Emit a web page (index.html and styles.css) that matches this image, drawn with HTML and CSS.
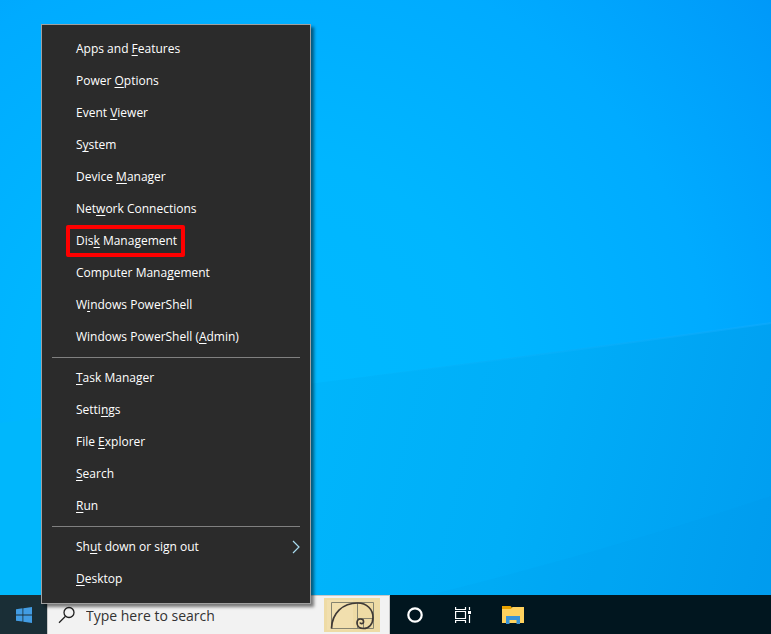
FILE: index.html
```html
<!DOCTYPE html>
<html lang="en">
  <head>
    <meta charset="UTF-8" />
    <meta name="viewport" content="width=device-width, initial-scale=1.0" />
    <title>Desktop</title>
    <link rel="stylesheet" href="styles.css">
  </head>

  <body>
    <main class="desktop">
        <svg class="wallpaper" viewBox="0 0 771 595" preserveAspectRatio="none" aria-hidden="true">
            <defs>
                <radialGradient id="sky" gradientUnits="userSpaceOnUse" cx="260" cy="400" r="700">
                    <stop offset="0" stop-color="#00baff"/>
                    <stop offset="0.35" stop-color="#00b6ff"/>
                    <stop offset="0.65" stop-color="#00abff"/>
                    <stop offset="1" stop-color="#0094f7"/>
                </radialGradient>
                <linearGradient id="floor" gradientUnits="userSpaceOnUse" x1="250" y1="400" x2="790" y2="540">
                    <stop offset="0" stop-color="#00b7fc"/>
                    <stop offset="0.5" stop-color="#00aef8"/>
                    <stop offset="1" stop-color="#009df0"/>
                </linearGradient>
                <linearGradient id="ray" x1="0" y1="0" x2="1" y2="0">
                    <stop offset="0" stop-color="#14beff" stop-opacity="0"/>
                    <stop offset="1" stop-color="#14acff" stop-opacity="0.5"/>
                </linearGradient>
            </defs>
            <rect width="771" height="595" fill="url(#sky)"/>
            <path d="M0 423 Q400 373 771 323 V595 H0Z" fill="url(#floor)"/>
            <path d="M310 383 Q560 352 771 322 L771 324 Q560 354 310 384Z" fill="url(#ray)"/>
            <path d="M430 595 Q610 550 771 496 V595Z" fill="#0090e0" fill-opacity="0.1"/>
        </svg>
    </main>

    <nav class="menu" aria-label="Quick links">
        <ul class="group">
            <li><button class="item">Apps and <u>F</u>eatures</button></li>
            <li><button class="item">Power <u>O</u>ptions</button></li>
            <li><button class="item">Event <u>V</u>iewer</button></li>
            <li><button class="item">S<u>y</u>stem</button></li>
            <li><button class="item">Device <u>M</u>anager</button></li>
            <li><button class="item">Net<u>w</u>ork Connections</button></li>
            <li><button class="item"><span class="marked">Dis<u>k</u> Management</span></button></li>
            <li><button class="item">Computer Mana<u>g</u>ement</button></li>
            <li><button class="item">W<u>i</u>ndows PowerShell</button></li>
            <li><button class="item">Windows PowerShell (<u>A</u>dmin)</button></li>
        </ul>
        <ul class="group">
            <li><button class="item"><u>T</u>ask Manager</button></li>
            <li><button class="item">Setti<u>n</u>gs</button></li>
            <li><button class="item">File <u>E</u>xplorer</button></li>
            <li><button class="item"><u>S</u>earch</button></li>
            <li><button class="item"><u>R</u>un</button></li>
        </ul>
        <ul class="group">
            <li>
                <button class="item submenu">
                    <span>Sh<u>u</u>t down or sign out</span>
                    <svg width="8" height="14" viewBox="0 0 8 14" aria-hidden="true">
                        <path d="M1 1l6 6-6 6" fill="none" stroke="#a9dcf0" stroke-width="1.2"/>
                    </svg>
                </button>
            </li>
            <li><button class="item"><u>D</u>esktop</button></li>
        </ul>
    </nav>

    <footer class="taskbar">
        <button class="start" aria-label="Start">
            <svg width="16" height="16" viewBox="0 0 16 16" aria-hidden="true">
                <path fill="#429ce3" d="M0 2.2l6.5-.9v6.2H0zM7.3 1.2L16 0v7.5H7.3zM0 8.4h6.5v6.2L0 13.8zM7.3 8.4H16V16l-8.7-1.2z"/>
            </svg>
        </button>

        <div class="search">
            <label for="search" aria-label="Search">
                <svg width="18" height="18" viewBox="0 0 18 18" aria-hidden="true">
                    <g fill="none" stroke="#1f1f1f" stroke-width="1.3">
                        <circle cx="11" cy="6.5" r="5"/>
                        <path d="M7.5 10.3L1 16.8"/>
                    </g>
                </svg>
            </label>
            <input type="text" id="search" placeholder="Type here to search">
            <svg class="spiral" width="56" height="34" viewBox="0 0 56 34" aria-hidden="true">
                <rect width="56" height="34" fill="#eedba5"/>
                <rect x="3" y="2" width="26" height="30" fill="#f3e1b4" fill-opacity="0.6"/>
                <g fill="none" stroke="#85836f" stroke-width="1">
                    <path d="M7.5 4.5H49.5V30.5H7.5zM33.500 4.500V30.500M33.500 20.500H49.500M39.500 20.500V30.500"/>
                </g>
                <path d="M7.500 30.500C8 15 19 5 33.500 5C43 5 49 11.500 49 19.500C49 26 45 30.500 39.500 30.500C35.500 30.500 33 28 33 25C33 22.500 34.500 21 36.500 21C38.800 21 39.800 22.500 39.500 24.200C39 26 36.500 26 36 24.500" fill="none" stroke="#3f3935" stroke-width="1.7"/>
            </svg>
        </div>

        <button class="app" aria-label="Cortana">
            <svg width="18" height="18" viewBox="0 0 18 18" aria-hidden="true">
                <circle cx="9" cy="9" r="6.7" fill="none" stroke="#fff" stroke-width="2.2"/>
            </svg>
        </button>
        <button class="app" aria-label="Task View">
            <svg width="18" height="18" viewBox="0 0 18 18" aria-hidden="true">
                <g fill="none" stroke="#fff" stroke-width="1.2">
                    <path d="M.6 1V3.500H10.500V1M.6 17V14.500H10.500V17M.6 5.500H10.500V12.500H.6zM14.500 1V4M14.500 9V17"/>
                </g>
                <path d="M13 5h3v3h-3z" fill="#fff"/>
            </svg>
        </button>
        <button class="app" aria-label="File Explorer">
            <svg width="22" height="20" viewBox="0 0 22 20" aria-hidden="true">
                <path d="M0 1h8.500l1.500 1.500V5H0z" fill="#e8a200"/>
                <path d="M0 4h9l1.500-2H22v16H0z" fill="#ffd25e"/>
                <path d="M4 19V11h14v8h-3.500v-4h-7v4z" fill="#3b94d6"/>
            </svg>
        </button>
    </footer>
  </body>
</html>
```
FILE: styles.css
```css
* {
  margin: 0;
  padding: 0;
  box-sizing: border-box;
  font-family: "Open Sans", "Noto Sans", sans-serif;
}

body {
  position: relative;
  display: flex;
  flex-direction: column;
  height: 100vh;
  overflow: hidden;
}

button {
  border: none;
  background: none;
  cursor: pointer;
}

svg {
  display: block;
  flex-shrink: 0;
}

.desktop {
  flex: 1;
  min-height: 0;
  background-color: #00b4ff;
}

.wallpaper {
  width: 100%;
  height: 100%;
}

/* Start button context menu, floats over the desktop */
.menu {
  position: absolute;
  left: 41px;
  bottom: 30px;
  z-index: 1;
  width: 270px;
  padding: 8px 10px;
  background-color: #2b2b2b;
  border: 1px solid #a0a0a0;
  box-shadow: 3px 3px 3px rgba(0, 0, 0, 0.5);
}

.group {
  list-style: none;
}

.group + .group {
  margin-top: 4px;
  padding-top: 4px;
  border-top: 1px solid #808080;
}

.item {
  display: flex;
  align-items: center;
  width: 100%;
  height: 32px;
  padding-left: 24px;
  color: white;
  font-size: 12px;
  line-height: 16px;
  white-space: pre;
}

.item:hover {
  background-color: #414141;
}

.item u {
  text-decoration-skip-ink: none;
  text-underline-offset: 2px;
}

.submenu {
  justify-content: space-between;
}

.marked {
  height: 32px;
  margin-left: -10px;
  padding: 0 4px 0 6px;
  line-height: 24px;
  border: 4px solid #ff0000;
  border-radius: 2px;
}

.taskbar {
  display: flex;
  height: 39px;
  background-color: #01161f;
}

.start {
  display: flex;
  align-items: center;
  justify-content: center;
  width: 47px;
  background-color: #1a2e36;
}

.search {
  display: flex;
  align-items: center;
  gap: 10px;
  width: 343px;
  padding: 0 9px 0 10px;
  background-color: #f2f2f2;
  border: 1px solid #c8c8c8;
  border-bottom: none;
}

.search input {
  flex: 1;
  min-width: 0;
  border: none;
  outline: none;
  background: none;
  color: #333333;
  font-size: 14px;
}

.search input::placeholder {
  color: #333333;
  opacity: 1;
}

.app {
  display: flex;
  align-items: center;
  justify-content: center;
  width: 49px;
}
```
